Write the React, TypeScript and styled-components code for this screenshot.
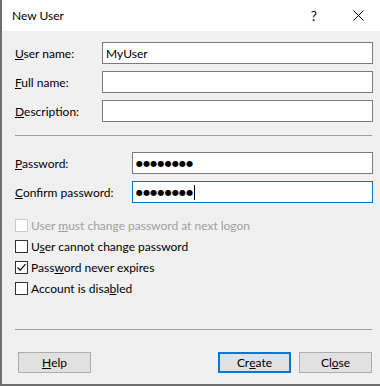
import React from 'react'
import styled, { createGlobalStyle } from 'styled-components'

const Global = createGlobalStyle`
  html, body {
    margin: 0;
    padding: 0;
    background: #ffffff;
  }
  * {
    box-sizing: border-box;
  }
`

const Window = styled.div`
  width: 380px;
  height: 386px;
  display: flex;
  flex-direction: column;
  background: #f0f0f0;
  border-left: 2px solid #6e6e6e;
  border-bottom: 2px solid #6e6e6e;
  font-family: Lato, 'Noto Sans', sans-serif;
  font-size: 12px;
  color: #000;
`

const TitleBar = styled.div`
  height: 31px;
  flex: none;
  display: flex;
  align-items: center;
  background: #ffffff;
  padding-left: 10px;
`

const Title = styled.div`
  flex: 1;
  font-size: 12px;
`

const TitleButton = styled.div`
  width: 44px;
  height: 31px;
  display: flex;
  align-items: center;
  justify-content: center;
  font-size: 14px;
`

const Body = styled.div`
  flex: 1;
  display: flex;
  flex-direction: column;
  padding: 11px 7px 0 13px;
`

const FieldGroup = styled.div<{ $labelWidth: number }>`
  display: grid;
  grid-template-columns: ${(p) => p.$labelWidth}px 1fr;
  row-gap: 7px;
  align-items: center;
`

const Label = styled.label`
  white-space: nowrap;
`

const Input = styled.div<{ $focused?: boolean }>`
  height: 22px;
  background: #ffffff;
  border: 1px solid ${(p) => (p.$focused ? '#0078d7' : '#7a7a7a')};
  display: flex;
  align-items: center;
  padding-left: 3px;
  white-space: nowrap;
`

const Dots = styled.span`
  font-family: 'DejaVu Sans', sans-serif;
  font-size: 8px;
  letter-spacing: 0.2px;
`

const Caret = styled.span`
  display: inline-block;
  width: 1px;
  height: 15px;
  background: #000;
  margin-left: 1px;
`

const Separator = styled.div<{ $top: number; $bottom: number }>`
  height: 1px;
  background: #a0a0a0;
  margin: ${(p) => p.$top}px 1px ${(p) => p.$bottom}px 0;
`

const Checks = styled.div`
  display: flex;
  flex-direction: column;
  gap: 8px;
  margin-top: 16px;
`

const CheckRow = styled.div<{ $disabled?: boolean }>`
  display: flex;
  align-items: center;
  height: 13px;
  gap: 3px;
  color: ${(p) => (p.$disabled ? '#a0a0a0' : '#000')};
`

const Box = styled.span<{ $disabled?: boolean }>`
  width: 13px;
  height: 13px;
  flex: none;
  background: #ffffff;
  border: 1px solid ${(p) => (p.$disabled ? '#cccccc' : '#333333')};
  display: flex;
  align-items: center;
  justify-content: center;
`

const Spacer = styled.div`
  flex: 1;
`

const Buttons = styled.div`
  display: flex;
  align-items: center;
  gap: 8px;
  padding: 21px 1px 0 3px;
  height: 43px;
  margin-bottom: 11px;
`

const Button = styled.div<{ $default?: boolean }>`
  width: 73px;
  height: 21px;
  display: flex;
  align-items: center;
  justify-content: center;
  background: #e1e1e1;
  border: ${(p) => (p.$default ? '2px solid #0078d7' : '1px solid #adadad')};
`

const Key = styled.u``

function Check({ checked, disabled, children }: { checked?: boolean; disabled?: boolean; children: React.ReactNode }) {
  return (
    <CheckRow $disabled={disabled}>
      <Box $disabled={disabled}>
        {checked && (
          <svg width="11" height="11" viewBox="0 0 11 11">
            <path d="M1.5 5.5 L4.2 8.2 L9.5 2.2" fill="none" stroke="#000" strokeWidth="1.1" />
          </svg>
        )}
      </Box>
      <span>{children}</span>
    </CheckRow>
  )
}

export default function App() {
  return (
    <>
      <Global />
      <Window>
        <TitleBar>
          <Title>New User</Title>
          <TitleButton>?</TitleButton>
          <TitleButton>
            <svg width="11" height="11" viewBox="0 0 11 11">
              <path d="M0.5 0.5 L10.5 10.5 M10.5 0.5 L0.5 10.5" stroke="#000" strokeWidth="1" />
            </svg>
          </TitleButton>
        </TitleBar>
        <Body>
          <FieldGroup $labelWidth={87}>
            <Label>
              <Key>U</Key>ser name:
            </Label>
            <Input>MyUser</Input>
            <Label>
              <Key>F</Key>ull name:
            </Label>
            <Input />
            <Label>
              <Key>D</Key>escription:
            </Label>
            <Input />
          </FieldGroup>
          <Separator $top={13} $bottom={16} />
          <FieldGroup $labelWidth={117}>
            <Label>
              <Key>P</Key>assword:
            </Label>
            <Input>
              <Dots>●●●●●●●●</Dots>
            </Input>
            <Label>
              <Key>C</Key>onfirm password:
            </Label>
            <Input $focused>
              <Dots>●●●●●●●●</Dots>
              <Caret />
            </Input>
          </FieldGroup>
          <Checks>
            <Check disabled>
              User <Key>m</Key>ust change password at next logon
            </Check>
            <Check>
              U<Key>s</Key>er cannot change password
            </Check>
            <Check checked>
              Pass<Key>w</Key>ord never expires
            </Check>
            <Check>
              Account is disa<Key>b</Key>led
            </Check>
          </Checks>
          <Spacer />
          <Separator $top={0} $bottom={0} />
          <Buttons>
            <Button>
              <Key>H</Key>elp
            </Button>
            <Spacer />
            <Button $default>
              Cr<Key>e</Key>ate
            </Button>
            <Button>
              Cl<Key>o</Key>se
            </Button>
          </Buttons>
        </Body>
      </Window>
    </>
  )
}
